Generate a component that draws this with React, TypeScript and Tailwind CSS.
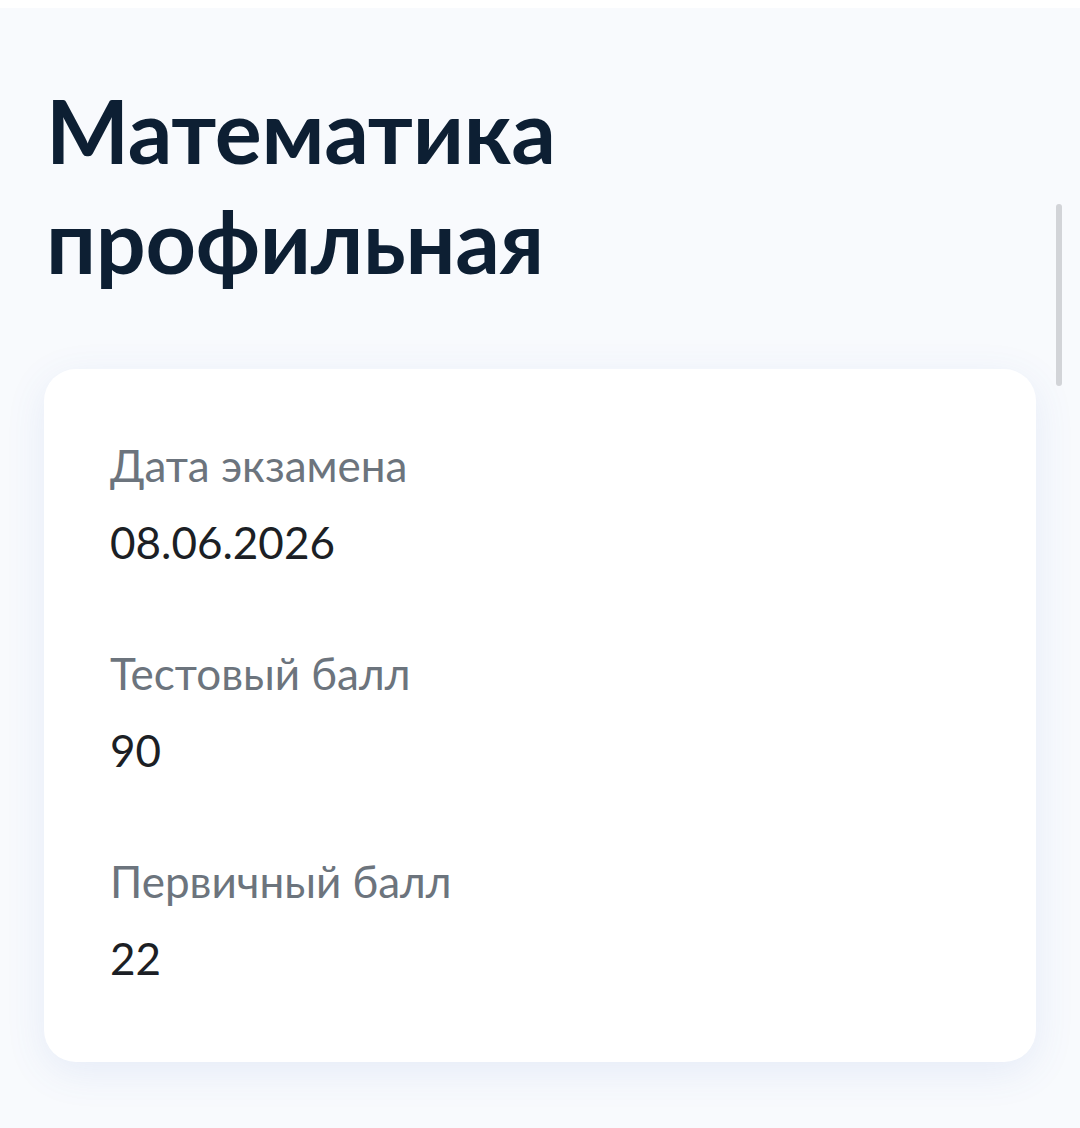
import React from 'react';

const rows = [
  { label: 'Дата экзамена', value: '08.06.2026' },
  { label: 'Тестовый балл', value: '90' },
  { label: 'Первичный балл', value: '22' },
];

export default function App() {
  return (
    <div className="relative w-[1080px] h-[1128px] overflow-hidden bg-[#f8fafd] font-['Lato','Noto_Sans',sans-serif]">
      <div className="h-[8px] bg-white" />
      <h1 className="pl-[46px] pt-[67px] text-[88px] leading-[110px] font-bold text-[#0d1f33] tracking-[-0.3px]">
        Математика
        <br />
        профильная
      </h1>

      <div className="mt-[74px] ml-[44px] w-[992px] rounded-[32px] bg-white pl-[66px] pt-[58px] pb-[65px] shadow-[0_10px_40px_rgba(70,110,200,0.10)] flex flex-col gap-[54px]">
        {rows.map(r => (
          <div key={r.label} className="flex flex-col">
            <span className="text-[44px] leading-[77px] text-[#6c747d]">{r.label}</span>
            <span className="text-[44px] leading-[77px] text-[#1c1f25]">{r.value}</span>
          </div>
        ))}
      </div>

      {/* scrollbar */}
      <div className="absolute left-[1056px] top-[204px] w-[6px] h-[182px] rounded-full bg-[#d2d4d8]" />
    </div>
  );
}
